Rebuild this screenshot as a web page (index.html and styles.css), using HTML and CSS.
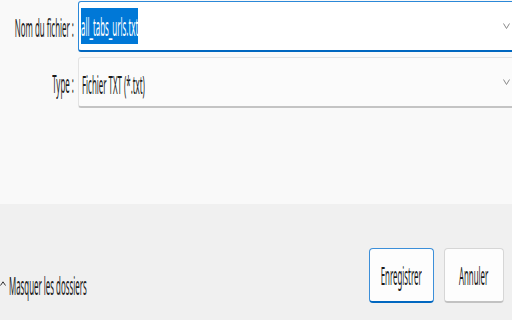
FILE: index.html
```html
<!DOCTYPE html>
<html lang="fr">
<head>
  <meta charset="UTF-8">
  <title>Enregistrer sous</title>
  <link rel="stylesheet" href="styles.css">
</head>
<body>
  <div id="dialog">
    <div id="fields">
      <div class="row">
        <label class="lbl"><span class="sq">Nom du fichier :</span></label>
        <div class="field focus">
          <span class="sel"><span class="sq">all_tabs_urls.txt</span></span>
          <svg class="chev" width="7" height="6" viewBox="0 0 7 6"><polyline points="0.5,0.5 3.5,5.5 6.5,0.5" fill="none" stroke="#8a8a8a" stroke-width="1"/></svg>
        </div>
      </div>
      <div class="row second">
        <label class="lbl"><span class="sq">Type :</span></label>
        <div class="field">
          <span class="val"><span class="sq">Fichier TXT (*.txt)</span></span>
          <svg class="chev" width="7" height="6" viewBox="0 0 7 6"><polyline points="0.5,0.5 3.5,5.5 6.5,0.5" fill="none" stroke="#8a8a8a" stroke-width="1"/></svg>
        </div>
      </div>
    </div>

    <div id="footer">
      <div class="toggle">
        <svg width="6" height="5" viewBox="0 0 6 5"><polyline points="0.5,4.5 3,0.8 5.5,4.5" fill="none" stroke="#333" stroke-width="1"/></svg>
        <span class="sq">Masquer les dossiers</span>
      </div>
      <div class="btn default"><span class="sq">Enregistrer</span></div>
      <div class="btn cancel"><span class="sq">Annuler</span></div>
    </div>
  </div>
</body>
</html>
```
FILE: styles.css
```css
*{margin: 0; padding: 0; box-sizing: border-box;}
body{
  width: 512px;
  height: 320px;
  overflow: hidden;
  background: #f9f9f9;
  font-family: "Noto Sans", "Open Sans", sans-serif;
  font-size: 25px;
  color: #1b1b1b;
}
#dialog{
  display: flex;
  flex-direction: column;
  height: 320px;
}
#fields{
  height: 204px;
  padding-top: 1px;
  background: #f9f9f9;
}
.row{
  display: flex;
  height: 51px;
}
.row.second{
  margin-top: 5px;
}
.lbl{
  width: 78px;
  padding-right: 4px;
  display: flex;
  align-items: center;
  justify-content: flex-end;
  white-space: nowrap;
}
/* le texte de la capture est tres serre en largeur */
.sq{
  display: inline-block;
  white-space: nowrap;
  transform: scaleX(.315);
  transform-origin: left center;
}
.lbl .sq{
  transform-origin: right center;
}
.field{
  flex: 1;
  margin-right: -6px;
  display: flex;
  align-items: center;
  padding: 0 7px 0 2px;
  background: #fbfbfb;
  border: 1px solid #e3e3e3;
  border-bottom: 2px solid #c4c4c4;
  border-radius: 3px;
}
.field.focus{
  background: #fff;
  border-color: #2b88d8;
  border-bottom-color: #0067c0;
}
.sel{
  width: 57px;
  height: 36px;
  line-height: 36px;
  background: #0078d7;
  color: #fff;
  overflow: visible;
}
.val{
  width: 70px;
  line-height: 36px;
  padding-top: 4px;
  padding-left: 1px;
}
.chev{
  margin-left: auto;
}
#footer{
  flex: 1;
  background: #f0f0f0;
  display: flex;
  align-items: flex-end;
  padding: 0 8px 17px 0;
}
.toggle{
  margin-right: auto;
  height: 30px;
  margin-bottom: 3px;
  display: flex;
  align-items: center;
  gap: 3px;
}
.toggle svg{
  margin-top: -4px;
}
.toggle .sq{
  width: 80px;
}
.btn{
  height: 55px;
  display: flex;
  align-items: center;
  justify-content: center;
  background: #fdfdfd;
  border: 1px solid #d6d6d6;
  border-bottom: 2px solid #c2c2c2;
  border-radius: 4px;
  overflow: visible;
}
.btn .sq{
  transform-origin: center center;
}
.btn.default{
  width: 65px;
  border-color: #3c8fd9;
  border-bottom-color: #0067c0;
}
.btn.cancel{
  width: 60px;
  margin-left: 10px;
}
```
